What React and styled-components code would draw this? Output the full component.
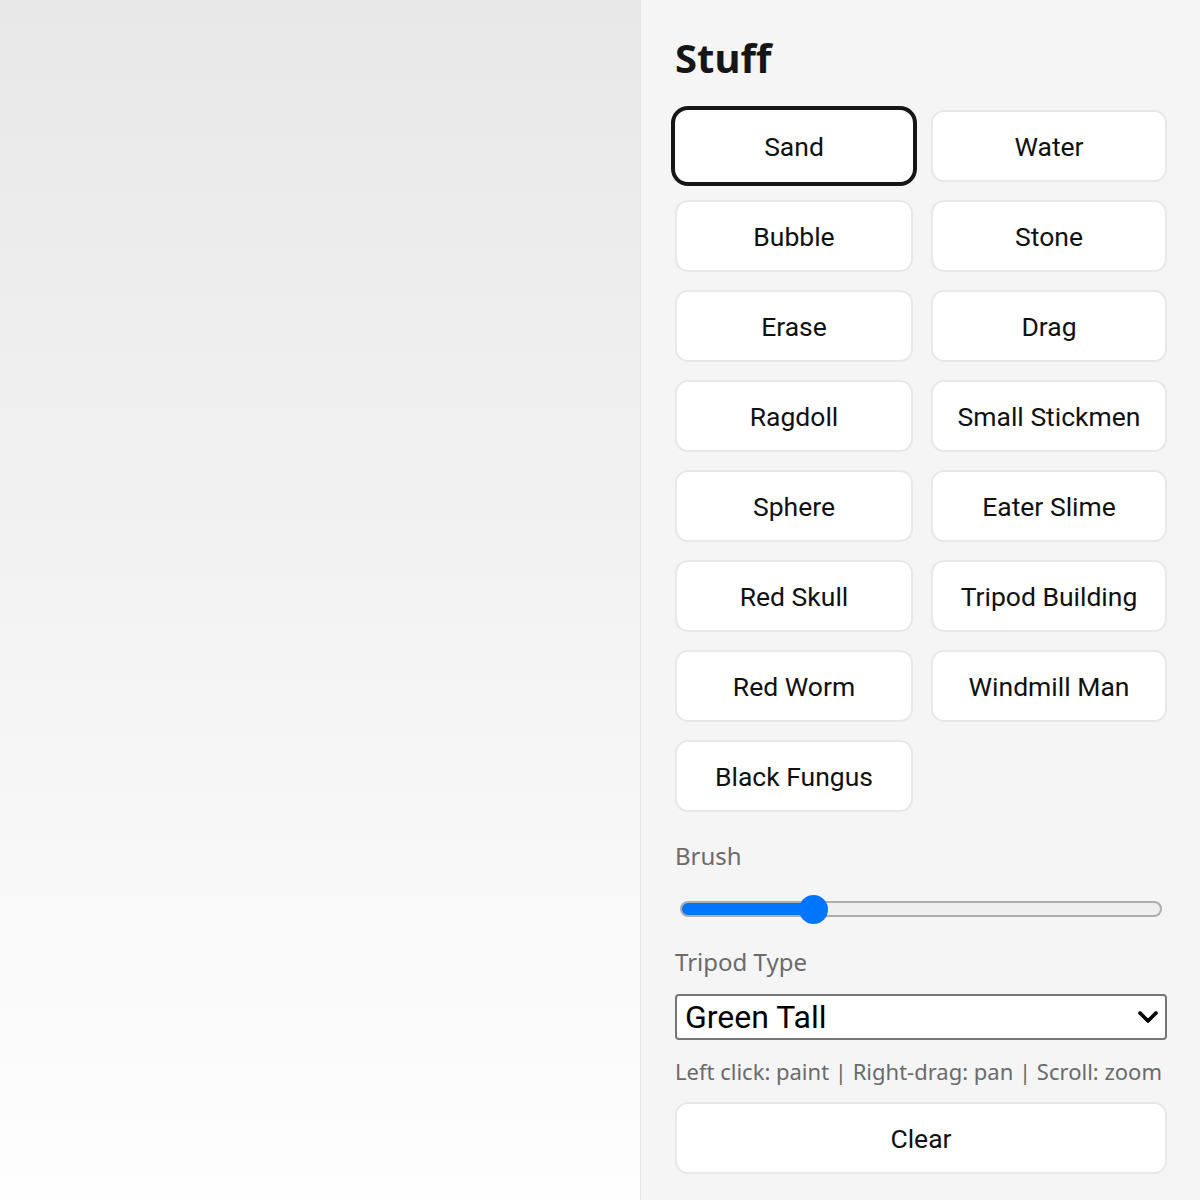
import React, { useState } from 'react';
import styled, { createGlobalStyle } from 'styled-components';

const GlobalStyle = createGlobalStyle`
    html, body {
        margin: 0;
        padding: 0;
    }

    body {
        font-family: "Noto Sans", "Liberation Sans", sans-serif;
        color: #111;
    }

    * {
        box-sizing: border-box;
    }
`

const Layout = styled.div`
    width: 1200px;
    height: 1200px;
    display: grid;
    grid-template-columns: 640px 1fr;
    overflow: hidden;
`

const Canvas = styled.div`
    background: linear-gradient(to bottom, #e8e8e8 0%, #fefefe 100%);
`

const Panel = styled.aside`
    background: #f5f5f5;
    border-left: 1px solid #e4e4e4;
    padding: 30px 33px 0 34px;
    display: flex;
    flex-direction: column;
`

const Title = styled.h2`
    margin: 0 0 24px;
    font-size: 40px;
    line-height: 56px;
    font-weight: 700;
    color: #161616;
`

const ToolGrid = styled.div`
    display: grid;
    grid-template-columns: 238px 1fr;
    gap: 18px;
`

const ToolButton = styled.button`
    height: 72px;
    border: 2px solid ${p => (p.$active ? '#fff' : '#e8e8e8')};
    border-radius: 13px;
    background: #fff;
    box-shadow: ${p => (p.$active ? '0 0 0 4px #161616' : 'none')};
    font-family: Roboto, "Liberation Sans", sans-serif;
    font-size: 26.5px;
    color: #111;
    cursor: pointer;
    padding: 0;
`

const FieldLabel = styled.div`
    font-size: 24px;
    line-height: 32px;
    color: #6b6b6b;
    margin: ${p => p.$top || '0'} 0 0;
`

const Range = styled.input`
    appearance: none;
    -webkit-appearance: none;
    margin: 22px 5px 0;
    width: calc(100% - 10px);
    height: 30px;
    background: transparent;
    display: block;

    &::-webkit-slider-runnable-track {
        height: 16px;
        border-radius: 8px;
        box-sizing: border-box;
        border: 2px solid #adadad;
        background: var(--fill);
    }

    &::-webkit-slider-thumb {
        -webkit-appearance: none;
        width: 29px;
        height: 29px;
        margin-top: -8.5px;
        border-radius: 50%;
        background: #0075ff;
        border: none;
    }
`

const SelectWrap = styled.div`
    position: relative;
    margin-top: 16px;
`

const Select = styled.select`
    appearance: none;
    -webkit-appearance: none;
    display: block;
    height: 46px;
    width: 100%;
    border: 2px solid #767676;
    border-radius: 4px;
    background: #fff;
    font-family: Roboto, "Liberation Sans", sans-serif;
    font-size: 32px;
    color: #000;
    padding: 0 40px 0 8px;
`

const Chevron = styled.svg`
    position: absolute;
    right: 8px;
    top: 50%;
    transform: translateY(-50%);
    pointer-events: none;
`

const Hint = styled.p`
    margin: 16px 0 0;
    font-size: 22px;
    line-height: 30px;
    color: #6b6b6b;
    white-space: nowrap;
`

const ClearButton = styled(ToolButton)`
    margin-top: 16px;
    width: 100%;
`

const tools = [
    'Sand', 'Water', 'Bubble', 'Stone', 'Erase', 'Drag', 'Ragdoll',
    'Small Stickmen', 'Sphere', 'Eater Slime', 'Red Skull', 'Tripod Building',
    'Red Worm', 'Windmill Man', 'Black Fungus',
]

export default function App() {
    const [tool, setTool] = useState('Sand')
    const [brush, setBrush] = useState(26)
    const [tripod, setTripod] = useState('green-tall')

    const fill = `linear-gradient(to right, #0075ff 0%, #0075ff ${brush}%, #efefef ${brush}%, #efefef 100%)`

    return (
        <Layout>
            <GlobalStyle />
            <Canvas />
            <Panel>
                <Title>Stuff</Title>
                <ToolGrid>
                    {tools.map(name => (
                        <ToolButton
                            key={name}
                            $active={tool === name}
                            onClick={() => setTool(name)}
                        >
                            {name}
                        </ToolButton>
                    ))}
                </ToolGrid>
                <FieldLabel $top="28px">Brush</FieldLabel>
                <Range
                    type="range"
                    min="0"
                    max="100"
                    value={brush}
                    onChange={e => setBrush(Number(e.target.value))}
                    style={{ '--fill': fill }}
                />
                <FieldLabel $top="22px">Tripod Type</FieldLabel>
                <SelectWrap>
                    <Select value={tripod} onChange={e => setTripod(e.target.value)}>
                        <option value="green-tall">Green Tall</option>
                        <option value="red-short">Red Short</option>
                        <option value="blue-wide">Blue Wide</option>
                    </Select>
                    <Chevron width="22" height="14" viewBox="0 0 22 14">
                        <path d="M3 3 L11 11 L19 3" fill="none" stroke="#000" strokeWidth="3.6" strokeLinecap="round" strokeLinejoin="round" />
                    </Chevron>
                </SelectWrap>
                <Hint>Left click: paint | Right-drag: pan | Scroll: zoom</Hint>
                <ClearButton>Clear</ClearButton>
            </Panel>
        </Layout>
    )
}
